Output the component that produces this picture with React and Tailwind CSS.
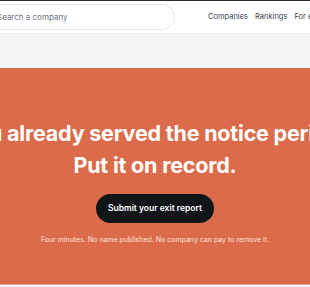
import React from "react";

function Header() {
  return (
    <div className="h-[34px] bg-white border-t border-[#23302b] border-b border-b-[#eceef0] flex items-center">
      <div className="shrink-0 ml-[-12px] w-[187px] h-[26px] rounded-full border border-[#e5e7eb] flex items-center pl-[8px]">
        <span className="text-[8px] text-[#6b7280]">Search a company</span>
      </div>
      <nav className="shrink-0 ml-[33px] flex items-center gap-[7px] text-[7.5px] text-[#374151] whitespace-nowrap">
        <span>Companies</span>
        <span>Rankings</span>
        <span>For employees</span>
      </nav>
    </div>
  );
}

export default function App() {
  return (
    <div className="w-[310px] h-[287px] overflow-hidden bg-[#f3f4f6] font-['Inter',sans-serif]">
      <Header />
      <div className="h-[34px] bg-[#f3f4f6]" />
      <section className="h-[217px] bg-[#db6b4a] flex flex-col items-center border-b border-[#e8a58f]">
        <div className="mt-[49px] w-full flex flex-col items-center text-white font-bold text-[21.5px] leading-[32px] tracking-[-0.2px]">
          <div className="whitespace-nowrap">You already served the notice period.</div>
          <div className="whitespace-nowrap">Put it on record.</div>
        </div>
        <button className="mt-[13px] w-[118px] h-[29px] rounded-full bg-[#101518] text-white text-[8.5px] font-semibold">
          Submit your exit report
        </button>
        <p className="mt-[12px] text-[7px] text-[#fbe3d8] whitespace-nowrap">
          Four minutes. No name published. No company can pay to remove it.
        </p>
      </section>
    </div>
  );
}
